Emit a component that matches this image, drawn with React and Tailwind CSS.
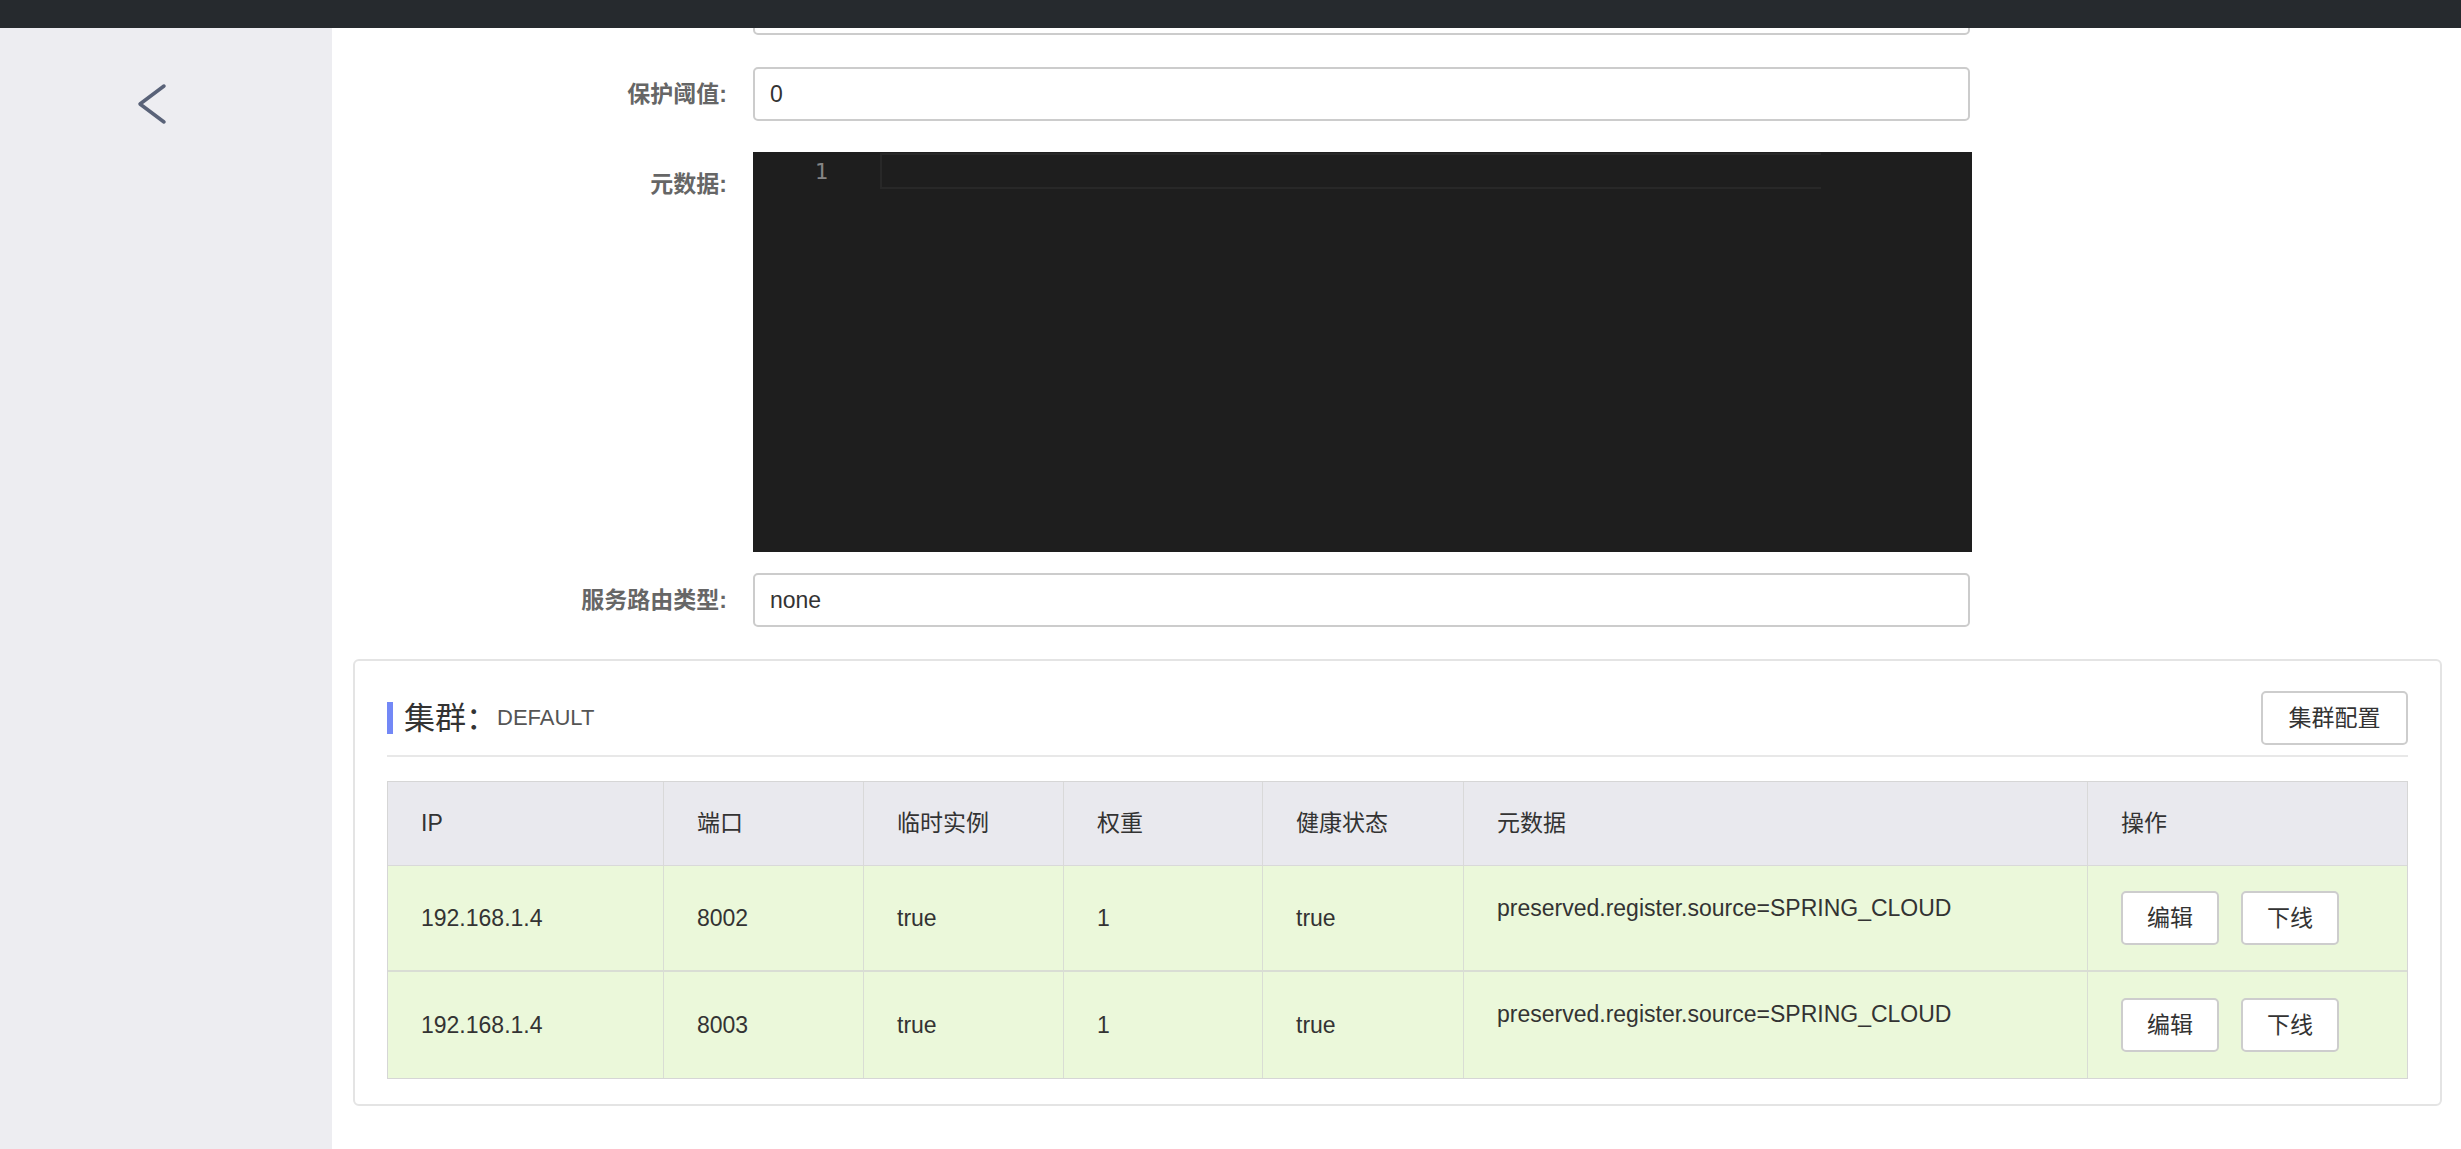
import React from "react";

const FONT = { fontFamily: '"Liberation Sans", "Noto Sans CJK SC", sans-serif' };

const cols = [
  { key: "ip", title: "IP", w: "w-[276px]" },
  { key: "port", title: "端口", w: "w-[200px]" },
  { key: "eph", title: "临时实例", w: "w-[200px]" },
  { key: "weight", title: "权重", w: "w-[199px]" },
  { key: "health", title: "健康状态", w: "w-[201px]" },
  { key: "meta", title: "元数据", w: "w-[624px]" },
  { key: "op", title: "操作", w: "flex-1" },
];

const rows = [
  { ip: "192.168.1.4", port: "8002", eph: "true", weight: "1", health: "true", meta: "preserved.register.source=SPRING_CLOUD" },
  { ip: "192.168.1.4", port: "8003", eph: "true", weight: "1", health: "true", meta: "preserved.register.source=SPRING_CLOUD" },
];

function Label({ children, className = "" }) {
  return (
    <div className={"w-[395px] shrink-0 text-right font-bold text-[23px] text-[#666666] " + className}>
      {children}
    </div>
  );
}

function TextInput({ value }) {
  return (
    <div className="w-[1217px] h-[54px] shrink-0 border-2 border-[#cccccc] rounded-[5px] bg-white flex items-center pl-[15px] text-[23px] text-[#333333]">
      {value}
    </div>
  );
}

function Btn({ children, className = "" }) {
  return (
    <div className={"h-[54px] border-2 border-[#cdcdcd] rounded-[5px] bg-white flex items-center justify-center text-[23px] text-[#333333] " + className}>
      {children}
    </div>
  );
}

export default function App() {
  return (
    <div className="w-[2461px] h-[1149px] overflow-hidden flex flex-col bg-white" style={FONT}>
      <div className="h-[28px] shrink-0 bg-[#262a2e] relative z-10" />
      <div className="flex flex-1 min-h-0">
        <div className="w-[332px] shrink-0 bg-[#ededf1] pt-[55px] pl-[137px]">
          <svg width="30" height="42" viewBox="0 0 30 42" fill="none">
            <polyline points="27,3 3,21 27,39" stroke="#596278" strokeWidth="3.5" strokeLinecap="round" strokeLinejoin="round" />
          </svg>
        </div>
        <div className="flex-1 min-w-0 overflow-hidden">
          <div className="-mt-[47px] flex flex-col">
            <div className="flex items-center gap-[26px]">
              <Label>&nbsp;</Label>
              <TextInput value="" />
            </div>
            <div className="flex items-center gap-[26px] mt-[32px]">
              <Label>保护阈值:</Label>
              <TextInput value="0" />
            </div>
            <div className="flex items-start gap-[26px] mt-[31px]">
              <Label className="pt-[15px]">元数据:</Label>
              <div className="w-[1219px] h-[400px] shrink-0 bg-[#1e1e1e] flex items-start pt-[1px]">
                <div className="w-[127px] shrink-0 h-[36px] flex items-center justify-end pr-[52px] text-[22px] text-[#858585]" style={{ fontFamily: '"DejaVu Sans Mono", monospace' }}>
                  1
                </div>
                <div className="w-[941px] h-[36px] border-y-2 border-l-2 border-[#282828]" />
              </div>
            </div>
            <div className="flex items-center gap-[26px] mt-[21px]">
              <Label>服务路由类型:</Label>
              <TextInput value="none" />
            </div>

            <div className="ml-[21px] mr-[19px] mt-[32px] border-2 border-[#e4e4e4] rounded-[6px] px-[32px] pb-[25px]">
              <div className="pt-[30px] pb-[10px] border-b-2 border-[#e8e8e8] flex items-center justify-between">
                <div className="flex items-center">
                  <div className="w-[6px] h-[32px] bg-[#7388f6] mr-[11px]" />
                  <span className="text-[31px] text-[#333333] leading-none">集群：</span>
                  <span className="text-[22px] text-[#555555] leading-none">DEFAULT</span>
                </div>
                <Btn className="w-[147px]">集群配置</Btn>
              </div>

              <div className="mt-[24px] border border-[#d6d6d6]">
                <div className="flex h-[84px] bg-[#e9e9ee] border-b border-[#d9d9d9]">
                  {cols.map((c, i) => (
                    <div
                      key={c.key}
                      className={c.w + " shrink-0 flex items-center pl-[33px] text-[23px] text-[#333333] " + (i < cols.length - 1 ? "border-r border-[#d9d9d9]" : "")}
                    >
                      {c.title}
                    </div>
                  ))}
                </div>
                {rows.map((r, ri) => (
                  <div
                    key={ri}
                    className={"flex h-[106px] bg-[#ebf8da] " + (ri < rows.length - 1 ? "border-b-2 border-[#d9ddd4]" : "")}
                  >
                    {cols.map((c, i) => {
                      const br = i < cols.length - 1 ? " border-r border-[#d9ddd4]" : "";
                      if (c.key === "op") {
                        return (
                          <div key={c.key} className={c.w + " shrink-0 flex items-center pl-[33px] gap-[22px]"}>
                            <Btn className="w-[98px]">编辑</Btn>
                            <Btn className="w-[98px]">下线</Btn>
                          </div>
                        );
                      }
                      if (c.key === "meta") {
                        return (
                          <div key={c.key} className={c.w + " shrink-0 pl-[33px] pt-[28px] text-[23px] text-[#333333] leading-[28px]" + br}>
                            {r.meta}
                          </div>
                        );
                      }
                      return (
                        <div key={c.key} className={c.w + " shrink-0 flex items-center pl-[33px] text-[23px] text-[#333333]" + br}>
                          {r[c.key]}
                        </div>
                      );
                    })}
                  </div>
                ))}
              </div>
            </div>
          </div>
        </div>
      </div>
    </div>
  );
}
